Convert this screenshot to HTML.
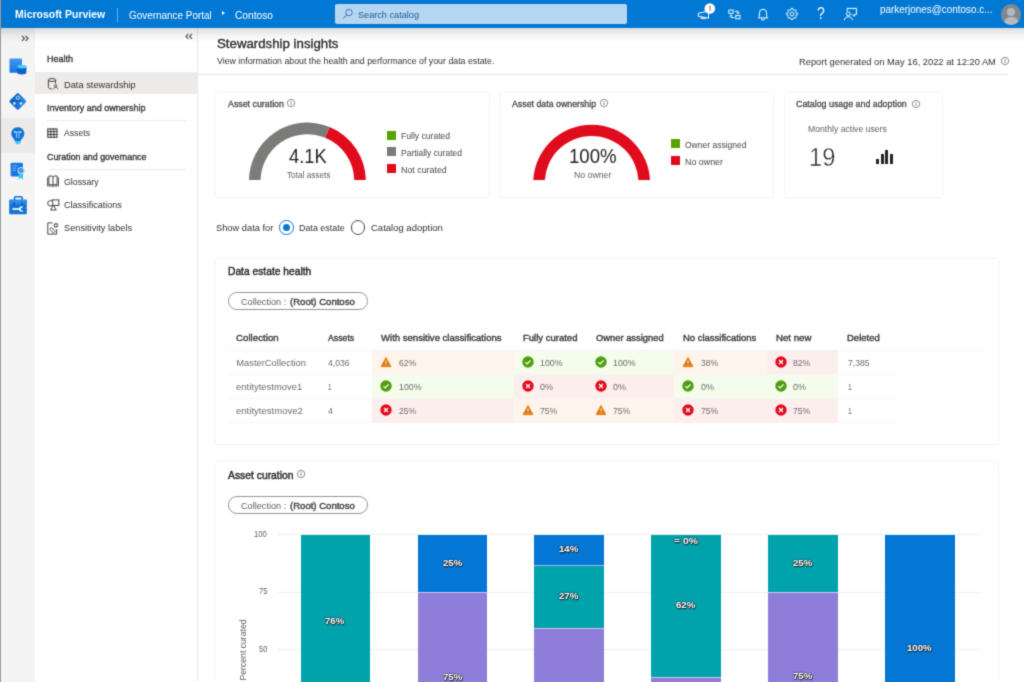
<!DOCTYPE html>
<html>
<head>
<meta charset="utf-8">
<title>Stewardship insights - Microsoft Purview</title>
<style>
*{box-sizing:border-box;margin:0;padding:0}
html,body{width:1024px;height:682px;overflow:hidden;background:#fff}
body{font-family:"Liberation Sans",sans-serif;color:#323130;position:relative;font-size:9.5px}
.a{position:absolute}
.t{position:absolute;white-space:nowrap;line-height:1;transform-origin:0 50%}
.card{position:absolute;background:#fff;box-shadow:0 0 2.5px rgba(0,0,0,.09),0 0.5px 1.5px rgba(0,0,0,.05)}
svg{position:absolute;overflow:visible}
</style>
</head>
<body>
<svg width="0" height="0" style="position:absolute"><filter id="soft" x="0" y="0" width="100%" height="100%" color-interpolation-filters="sRGB"><feConvolveMatrix order="3" kernelMatrix="0.0243 0.1072 0.0243 0.1072 0.4741 0.1072 0.0243 0.1072 0.0243" divisor="1" edgeMode="duplicate" preserveAlpha="true"/></filter></svg>
<div id="page" style="position:absolute;left:0;top:0;width:1024px;height:682px;filter:url(#soft)">
<div class="a" style="left:0px;top:28px;width:1024px;height:674px;background:#fff;"></div>
<div class="a" style="left:198px;top:28px;width:826px;height:47px;background:#fff;"></div>
<div class="a" style="left:198px;top:74px;width:810px;height:1px;background:#e3e2e1;"></div>
<div class="a" style="left:1px;top:28px;width:34px;height:674px;background:#f5f4f4;"></div>
<div class="a" style="left:1px;top:118px;width:34px;height:35px;background:#ebeae9;"></div>
<div class="a" style="left:35px;top:28px;width:163px;height:674px;background:#fff;border-right:1px solid #e9e8e7"></div>
<div class="a" style="left:0px;top:28px;width:1024px;height:16px;background:linear-gradient(rgba(0,0,0,.135) 0%,rgba(0,0,0,.085) 25%,rgba(0,0,0,.04) 50%,rgba(0,0,0,.012) 75%,rgba(0,0,0,0) 100%);"></div>
<div class="a" style="left:0px;top:0px;width:1024px;height:28px;background:#0078d4;"></div>
<div class="t" style="left:15.30px;top:9.33px;font-size:10.6px;color:#fff;font-weight:bold;transform:scaleX(0.9880);">Microsoft Purview</div>
<div class="a" style="left:117px;top:8px;width:1px;height:14px;background:#6aa9e6;"></div>
<div class="t" style="left:129.20px;top:10.50px;font-size:10.4px;color:#fff;transform:scaleX(0.9548);">Governance Portal</div>
<div class="a" style="left:221.8px;top:10.6px;width:0;height:0;border-left:3.6px solid #fff;border-top:2.8px solid transparent;border-bottom:2.8px solid transparent"></div>
<div class="t" style="left:235.30px;top:10.50px;font-size:10.4px;color:#fff;transform:scaleX(0.9810);">Contoso</div>
<div class="a" style="left:335.2px;top:4px;width:291.6px;height:20.4px;background:#b5d6f1;border-radius:2px"></div>
<div class="t" style="left:358.30px;top:9.57px;font-size:9.6px;color:#1f5c99;transform:scaleX(0.9525);">Search catalog</div>
<svg style="left:342px;top:8px" width="12" height="12" viewBox="0 0 12 12"><circle cx="7" cy="4.6" r="3.2" fill="none" stroke="#356fa8" stroke-width="0.9"/><path d="M4.7 6.9 L1.2 10.6" stroke="#356fa8" stroke-width="1" fill="none"/></svg>
<div class="t" style="left:880.00px;top:4.78px;font-size:10.3px;color:#fff;transform:scaleX(0.9620);">parkerjones@contoso.c...</div>
<div class="a" style="left:1001px;top:4.3px;width:20.4px;height:20.4px;border-radius:50%;background:#808890;overflow:hidden"><div class="a" style="left:6px;top:3.5px;width:8px;height:8px;border-radius:50%;background:#b6babe"></div><div class="a" style="left:2.5px;top:12.5px;width:15px;height:12px;border-radius:7px 7px 0 0;background:#b6babe"></div></div>
<svg style="left:696px;top:2px" width="22" height="20" viewBox="0 0 22 20"><path d="M2.3 11.2 L12.6 9.2 V16.2 L2.3 14.2 Z" fill="none" stroke="#fff" stroke-width="1" stroke-linejoin="round"/><path d="M5.2 14.9 v1.5 h4.4 v-0.7" fill="none" stroke="#fff" stroke-width="1"/><circle cx="13.8" cy="6.5" r="5.3" fill="#fff"/><path d="M13 5.1 l1.1 -0.9 v4.9" stroke="#a85a1e" stroke-width="0.9" fill="none"/></svg>
<svg style="left:727.6px;top:8.6px" width="13" height="11" viewBox="0 0 13 11"><rect x="0.9" y="1" width="4.2" height="3.4" fill="none" stroke="#fff" stroke-width="0.95"/><rect x="7.8" y="6.4" width="4.2" height="3.4" fill="none" stroke="#fff" stroke-width="0.95"/><path d="M6.6 2.2 h3.4 v2.4 M8.5 3.4 l1.5 1.5 l1.5 -1.5" fill="none" stroke="#fff" stroke-width="0.9"/><path d="M6.4 8.6 h-3.4 v-2.4 M1.5 7.4 l1.5 -1.5 l1.5 1.5" fill="none" stroke="#fff" stroke-width="0.9"/></svg>
<svg style="left:756.5px;top:7.5px" width="12" height="14" viewBox="0 0 12 14"><path d="M6 1.2 a3.6 3.6 0 0 1 3.6 3.6 v3.4 l1.1 1.7 h-9.4 l1.1 -1.7 v-3.4 a3.6 3.6 0 0 1 3.6 -3.6 z" fill="none" stroke="#fff" stroke-width="1" stroke-linejoin="round"/><path d="M4.5 10.6 a1.5 1.5 0 0 0 3 0" fill="none" stroke="#fff" stroke-width="1"/></svg>
<svg style="left:784.8px;top:7.3px" width="14" height="14" viewBox="0 0 14 14"><path d="M12.55 6.27 L12.55 7.73 L11.06 8.09 L10.64 9.10 L11.44 10.41 L10.41 11.44 L9.10 10.64 L8.09 11.06 L7.73 12.55 L6.27 12.55 L5.91 11.06 L4.90 10.64 L3.59 11.44 L2.56 10.41 L3.36 9.10 L2.94 8.09 L1.45 7.73 L1.45 6.27 L2.94 5.91 L3.36 4.90 L2.56 3.59 L3.59 2.56 L4.90 3.36 L5.91 2.94 L6.27 1.45 L7.73 1.45 L8.09 2.94 L9.10 3.36 L10.41 2.56 L11.44 3.59 L10.64 4.90 L11.06 5.91 Z" fill="none" stroke="#fff" stroke-width="0.95" stroke-linejoin="round"/><circle cx="7" cy="7" r="1.9" fill="none" stroke="#fff" stroke-width="0.95"/></svg>
<div class="t" style="left:816.80px;top:6.19px;font-size:15.6px;color:#fff;transform:scaleX(0.8990);">?</div>
<svg style="left:843px;top:7px" width="15" height="14" viewBox="0 0 15 14"><path d="M4.2 4.4 v-3 h9.2 v6.2 h-2.2 v1.8 l-1.8 -1.8 h-0.6" fill="none" stroke="#fff" stroke-width="1" stroke-linejoin="round"/><circle cx="5.4" cy="6.8" r="1.9" fill="none" stroke="#fff" stroke-width="1"/><path d="M1.4 13.2 c0 -4.6 8 -4.6 8 0" fill="none" stroke="#fff" stroke-width="1"/></svg>
<div class="t" style="left:216.80px;top:36.70px;font-size:13.7px;color:#2b2a29;-webkit-text-stroke:0.36px #2b2a29;transform:scaleX(0.9678);">Stewardship insights</div>
<div class="t" style="left:216.80px;top:56.73px;font-size:9.3px;color:#323130;transform:scaleX(0.9472);">View information about the health and performance of your data estate.</div>
<div class="t" style="left:799.00px;top:57.17px;font-size:9.6px;color:#323130;transform:scaleX(0.9714);">Report generated on May 16, 2022 at 12:20 AM</div>
<svg style="left:21.3px;top:34.6px" width="9" height="7" viewBox="0 0 9 7"><path d="M1 0.9 L3.4 3.4 L1 5.9 M4.6 0.9 L7 3.4 L4.6 5.9" fill="none" stroke="#454341" stroke-width="1.1"/></svg>
<svg style="left:8px;top:56px" width="20" height="20" viewBox="0 0 20 20"><defs><linearGradient id="g1" x1="0" y1="0" x2="0" y2="1"><stop offset="0" stop-color="#3f98f0"/><stop offset="1" stop-color="#1a72dc"/></linearGradient></defs><rect x="1.5" y="2.4" width="12.5" height="14.3" rx="0.8" fill="url(#g1)"/><path d="M9.3 10.6 v6 a4.55 1.9 0 0 0 9.1 0 v-6 z" fill="#0b63c6"/><ellipse cx="13.85" cy="10.6" rx="4.55" ry="1.9" fill="#4fd2f2"/></svg>
<svg style="left:8px;top:91px" width="20" height="20" viewBox="0 0 20 20"><defs><linearGradient id="g2" x1="1" y1="0" x2="0" y2="1"><stop offset="0" stop-color="#2c8bea"/><stop offset="1" stop-color="#0c5cc0"/></linearGradient></defs><rect x="3.5" y="4.1" width="12.6" height="12.6" rx="1.5" transform="rotate(45 9.8 10.4)" fill="url(#g2)"/><path d="M9.8 8.4 L6.6 12.2 M9.8 8.4 L12.9 12.2" stroke="#0b52ad" stroke-width="1.1" fill="none"/><circle cx="9.8" cy="6.9" r="1.6" fill="#1a6fd0" stroke="#bfe6ff" stroke-width="0.9"/><circle cx="6.4" cy="12.4" r="1.4" fill="#b6e9ff"/><circle cx="12.95" cy="12.4" r="1.4" fill="#b6e9ff"/></svg>
<svg style="left:8px;top:124px" width="20" height="22" viewBox="0 0 20 22"><path d="M9.8 3.2 a6.4 6.4 0 0 1 4.3 11.2 c-0.9 0.9 -1.2 1.6 -1.3 2.9 h-6 c-0.1 -1.3 -0.4 -2 -1.3 -2.9 a6.4 6.4 0 0 1 4.3 -11.2 z" fill="#1272d6"/><rect x="7" y="17" width="5.6" height="2.2" rx="0.6" fill="#3ccaf2"/><rect x="8" y="19" width="3.6" height="1.3" rx="0.6" fill="#3ccaf2"/><path d="M7.4 8 h4.8 M8.6 8 v6 M11 8 v6" stroke="#9fd4fb" stroke-width="0.9" fill="none"/><circle cx="7" cy="8" r="0.9" fill="#cfeaff"/><circle cx="12.6" cy="8" r="0.9" fill="#cfeaff"/></svg>
<svg style="left:8px;top:160px" width="20" height="22" viewBox="0 0 20 22"><rect x="2.6" y="2.8" width="12.3" height="13.6" rx="0.8" fill="#1a76de"/><path d="M4.5 6 h5 M4.5 8.2 h3.4 M4.5 10.4 h3.4" stroke="#7fbaf3" stroke-width="0.9"/><path d="M10.8 13 v6.4 l2.1 -1.6 l2.1 1.6 v-6.4 z" fill="#35c6f0"/><circle cx="13" cy="10.4" r="3.5" fill="#a9d2f6"/><circle cx="13" cy="10.4" r="2.2" fill="#1a76de"/><path d="M11.9 10.4 l0.8 0.8 l1.5 -1.6" stroke="#fff" stroke-width="0.7" fill="none"/></svg>
<svg style="left:8px;top:194px" width="22" height="22" viewBox="0 0 22 22"><path d="M6.5 6 v-2.2 a1 1 0 0 1 1 -1 h5.6 a1 1 0 0 1 1 1 v2.2" fill="none" stroke="#1272d6" stroke-width="1.6"/><rect x="1.2" y="5.8" width="17.6" height="14.4" rx="1" fill="#1272d6"/><rect x="1.2" y="5.8" width="17.6" height="4.4" rx="1" fill="#2f8ae8"/><rect x="5.4" y="8.4" width="1.6" height="2.8" fill="#0a56b0"/><rect x="13" y="8.4" width="1.6" height="2.8" fill="#0a56b0"/><path d="M4.4 15 h8.4" stroke="#fff" stroke-width="1.6"/><path d="M14.6 13.3 a2 2 0 1 0 0 3.4" stroke="#fff" stroke-width="1.4" fill="none"/></svg>
<svg style="left:184.8px;top:33.2px" width="9" height="7" viewBox="0 0 9 7"><path d="M3.4 0.9 L1 3.4 L3.4 5.9 M7 0.9 L4.6 3.4 L7 5.9" fill="none" stroke="#454341" stroke-width="1.1"/></svg>
<div class="t" style="left:47.20px;top:55.01px;font-size:9.2px;color:#3b3a39;-webkit-text-stroke:0.37px #3b3a39;transform:scaleX(0.9776);">Health</div>
<div class="a" style="left:35px;top:72px;width:162.4px;height:22.3px;background:#edebe9;"></div>
<div class="t" style="left:64.30px;top:79.54px;font-size:9.4px;color:#323130;transform:scaleX(0.9900);">Data stewardship</div>
<div class="t" style="left:47.20px;top:104.21px;font-size:9.2px;color:#3b3a39;-webkit-text-stroke:0.37px #3b3a39;transform:scaleX(0.9836);">Inventory and ownership</div>
<div class="a" style="left:47px;top:120px;width:139px;height:1px;background:#eae9e8;"></div>
<div class="t" style="left:64.30px;top:128.44px;font-size:9.4px;color:#323130;transform:scaleX(0.9252);">Assets</div>
<div class="t" style="left:47.20px;top:152.81px;font-size:9.2px;color:#3b3a39;-webkit-text-stroke:0.37px #3b3a39;transform:scaleX(0.9640);">Curation and governance</div>
<div class="a" style="left:47px;top:168.6px;width:139px;height:1px;background:#eae9e8;"></div>
<div class="t" style="left:64.30px;top:176.74px;font-size:9.4px;color:#323130;transform:scaleX(0.9356);">Glossary</div>
<div class="t" style="left:64.30px;top:200.04px;font-size:9.4px;color:#323130;transform:scaleX(0.9654);">Classifications</div>
<div class="t" style="left:64.30px;top:223.24px;font-size:9.4px;color:#323130;transform:scaleX(0.9829);">Sensitivity labels</div>
<svg style="left:47px;top:77px" width="12" height="13" viewBox="0 0 12 13"><path d="M1.4 3 v7.2 c0 1.1 1.6 1.7 3.6 1.7" fill="none" stroke="#3b3a39" stroke-width="0.95"/><path d="M8.6 3 v3.4" fill="none" stroke="#3b3a39" stroke-width="0.95"/><ellipse cx="5" cy="3" rx="3.6" ry="1.5" fill="none" stroke="#3b3a39" stroke-width="0.95"/><circle cx="8.6" cy="8.6" r="1.15" fill="none" stroke="#3b3a39" stroke-width="0.85"/><path d="M6.5 12.2 c0 -2.6 4.2 -2.6 4.2 0" fill="none" stroke="#3b3a39" stroke-width="0.85"/></svg>
<svg style="left:47px;top:127.5px" width="11" height="10" viewBox="0 0 11 10"><rect x="0.8" y="0.9" width="9.2" height="8.4" fill="#fff" stroke="#3b3a39" stroke-width="1.1"/><path d="M3.85 0.9 v8.4 M6.95 0.9 v8.4 M0.8 3.7 h9.2 M0.8 6.5 h9.2" stroke="#3b3a39" stroke-width="1" fill="none"/></svg>
<svg style="left:46.5px;top:175px" width="12" height="12" viewBox="0 0 12 12"><path d="M1.9 1 h2.5 a1.6 1.6 0 0 1 1.6 1.4 a1.6 1.6 0 0 1 1.6 -1.4 h2.5 v8.6 h-2.5 a1.6 1.6 0 0 0 -1.6 1 a1.6 1.6 0 0 0 -1.6 -1 h-2.5 z M6 2.4 v8.2" fill="none" stroke="#3b3a39" stroke-width="0.95"/><path d="M0.6 2.4 v8.6 h10.8 v-8.6" fill="none" stroke="#3b3a39" stroke-width="0.9"/></svg>
<svg style="left:46.5px;top:199px" width="13" height="12" viewBox="0 0 13 12"><rect x="5.2" y="0.9" width="6.6" height="5.6" fill="none" stroke="#3b3a39" stroke-width="0.95"/><circle cx="3.4" cy="4.3" r="2.7" fill="#fff" stroke="#3b3a39" stroke-width="0.95"/><path d="M6.4 6.6 l2.9 4.4 h-5.8 z" fill="#fff" stroke="#3b3a39" stroke-width="0.95" stroke-linejoin="round"/></svg>
<svg style="left:47px;top:221.5px" width="12" height="13" viewBox="0 0 12 13"><path d="M5.6 0.9 h-4.8 v11.2 h8.8 v-5" fill="none" stroke="#3b3a39" stroke-width="0.95"/><rect x="2.6" y="6.9" width="5.6" height="2.5" rx="0.7" transform="rotate(45 5.4 8.15)" fill="none" stroke="#3b3a39" stroke-width="0.85"/><circle cx="8.9" cy="3.3" r="1.55" fill="none" stroke="#3b3a39" stroke-width="0.9"/><path d="M8.9 0.8 v1 M8.9 4.8 v1 M6.4 3.3 h1 M10.4 3.3 h1 M7.1 1.5 l0.7 0.7 M10 4.4 l0.7 0.7 M10.7 1.5 l-0.7 0.7 M7.8 4.4 l-0.7 0.7" stroke="#3b3a39" stroke-width="0.8"/></svg>
<div class="card" style="left:216px;top:92.5px;width:272.5px;height:104.5px"></div>
<div class="card" style="left:500px;top:92.5px;width:272.5px;height:104.5px"></div>
<div class="card" style="left:785px;top:92.5px;width:156.5px;height:104.5px"></div>
<div class="t" style="left:227.60px;top:100.31px;font-size:9.2px;color:#464442;-webkit-text-stroke:0.28px #464442;transform:scaleX(0.9606);">Asset curation</div>
<svg style="left:286.2px;top:98.4px" width="10" height="10" viewBox="0 0 10 10"><circle cx="5" cy="5" r="3.7" fill="none" stroke="#605e5c" stroke-width="0.7"/><path d="M5 4.4 v2.5" stroke="#605e5c" stroke-width="0.8"/><circle cx="5" cy="3.2" r="0.5" fill="#605e5c"/></svg>
<div class="t" style="left:512.00px;top:100.31px;font-size:9.2px;color:#464442;-webkit-text-stroke:0.28px #464442;transform:scaleX(0.9572);">Asset data ownership</div>
<svg style="left:598.7px;top:98.4px" width="10" height="10" viewBox="0 0 10 10"><circle cx="5" cy="5" r="3.7" fill="none" stroke="#605e5c" stroke-width="0.7"/><path d="M5 4.4 v2.5" stroke="#605e5c" stroke-width="0.8"/><circle cx="5" cy="3.2" r="0.5" fill="#605e5c"/></svg>
<div class="t" style="left:796.30px;top:100.41px;font-size:9.2px;color:#464442;-webkit-text-stroke:0.28px #464442;transform:scaleX(0.9635);">Catalog usage and adoption</div>
<svg style="left:910.5px;top:98.6px" width="10" height="10" viewBox="0 0 10 10"><circle cx="5" cy="5" r="3.7" fill="none" stroke="#605e5c" stroke-width="0.7"/><path d="M5 4.4 v2.5" stroke="#605e5c" stroke-width="0.8"/><circle cx="5" cy="3.2" r="0.5" fill="#605e5c"/></svg>
<div class="a" style="left:0;top:0;width:1024px;height:180px;overflow:hidden"><svg style="left:0;top:0" width="1024" height="200" viewBox="0 0 1024 200"><path d="M248.96 182.02 A58.45 58.45 0 0 1 329.67 126.96 L325.25 137.69 A46.85 46.85 0 0 0 260.56 181.82 Z" fill="#7c7b7a"/><path d="M329.67 126.96 A58.45 58.45 0 0 1 365.84 182.02 L354.24 181.82 A46.85 46.85 0 0 0 325.25 137.69 Z" fill="#e00b1c"/><path d="M533.21 182.02 A58.45 58.45 0 0 1 650.09 182.02 L638.49 181.82 A46.85 46.85 0 0 0 544.81 181.82 Z" fill="#e00b1c"/></svg></div>
<div class="t" style="left:289.30px;top:147.44px;font-size:19.8px;color:#252423;transform:scaleX(0.9256);">4.1K</div>
<div class="t" style="left:286.50px;top:171.21px;font-size:9.2px;color:#605e5c;transform:scaleX(0.8955);">Total assets</div>
<div class="t" style="left:569.30px;top:147.44px;font-size:19.8px;color:#252423;transform:scaleX(0.9419);">100%</div>
<div class="t" style="left:573.80px;top:171.21px;font-size:9.2px;color:#605e5c;transform:scaleX(0.9498);">No owner</div>
<div class="a" style="left:387.2px;top:130.8px;width:8.8px;height:8.8px;background:#57a300;"></div>
<div class="a" style="left:387.2px;top:147.4px;width:8.8px;height:8.8px;background:#7c7b7a;"></div>
<div class="a" style="left:387.2px;top:164.1px;width:8.8px;height:8.8px;background:#e00b1c;"></div>
<div class="t" style="left:400.80px;top:132.13px;font-size:9.3px;color:#484644;transform:scaleX(0.9222);">Fully curated</div>
<div class="t" style="left:400.80px;top:148.93px;font-size:9.3px;color:#484644;transform:scaleX(0.9148);">Partially curated</div>
<div class="t" style="left:400.80px;top:165.63px;font-size:9.3px;color:#484644;transform:scaleX(0.9526);">Not curated</div>
<div class="a" style="left:671.3px;top:139.3px;width:8.9px;height:8.9px;background:#57a300;"></div>
<div class="a" style="left:671.3px;top:156.0px;width:8.9px;height:8.9px;background:#e00b1c;"></div>
<div class="t" style="left:685.20px;top:140.83px;font-size:9.3px;color:#484644;transform:scaleX(0.9151);">Owner assigned</div>
<div class="t" style="left:685.20px;top:157.63px;font-size:9.3px;color:#484644;transform:scaleX(0.9547);">No owner</div>
<div class="t" style="left:807.70px;top:124.71px;font-size:9.2px;color:#605e5c;transform:scaleX(0.9409);">Monthly active users</div>
<div class="t" style="left:809.20px;top:144.97px;font-size:25.2px;color:#252423;transform:scaleX(0.9382);-webkit-text-stroke:0.5px #fff;">19</div>
<div class="a" style="left:876.2px;top:158.7px;width:3.1px;height:5px;background:#252423;"></div>
<div class="a" style="left:880.7px;top:153.7px;width:3.1px;height:10px;background:#252423;"></div>
<div class="a" style="left:885.1px;top:150.0px;width:3.1px;height:13.7px;background:#252423;"></div>
<div class="a" style="left:889.6px;top:153.7px;width:3.1px;height:10px;background:#252423;"></div>
<svg style="left:999.5px;top:55.9px" width="10" height="10" viewBox="0 0 10 10"><circle cx="5" cy="5" r="3.7" fill="none" stroke="#605e5c" stroke-width="0.7"/><path d="M5 4.4 v2.5" stroke="#605e5c" stroke-width="0.8"/><circle cx="5" cy="3.2" r="0.5" fill="#605e5c"/></svg>
<div class="t" style="left:216.00px;top:223.04px;font-size:9.4px;color:#323130;transform:scaleX(0.9913);">Show data for</div>
<div class="a" style="left:279.4px;top:220.2px;width:14.6px;height:14.6px;border-radius:50%;border:1px solid #0078d4;background:#fff"></div><div class="a" style="left:283.1px;top:223.9px;width:7.2px;height:7.2px;border-radius:50%;background:#0078d4"></div>
<div class="t" style="left:299.20px;top:223.04px;font-size:9.4px;color:#323130;transform:scaleX(0.9527);">Data estate</div>
<div class="a" style="left:350.9px;top:220.2px;width:14.6px;height:14.6px;border-radius:50%;border:1px solid #4a4948;background:#fff"></div>
<div class="t" style="left:370.50px;top:223.04px;font-size:9.4px;color:#323130;transform:scaleX(1.0129);">Catalog adoption</div>
<div class="card" style="left:216px;top:258.5px;width:782px;height:185.5px"></div>
<div class="t" style="left:227.70px;top:267.40px;font-size:10.4px;color:#2b2a29;-webkit-text-stroke:0.42px #2b2a29;transform:scaleX(0.9868);">Data estate health</div>
<div class="a" style="left:228px;top:292.3px;width:139.7px;height:17.4px;border:1px solid #989694;border-radius:8.7px;background:#fff"></div>
<div class="t" style="left:240.60px;top:298.33px;font-size:9.3px;color:#605e5c;transform:scaleX(0.9837);">Collection : </div>
<div class="t" style="left:290.20px;top:298.33px;font-size:9.3px;color:#3b3a39;-webkit-text-stroke:0.37px #3b3a39;transform:scaleX(1.0275);">(Root) Contoso</div>
<div class="t" style="left:236.20px;top:333.71px;font-size:9.2px;color:#3b3a39;-webkit-text-stroke:0.37px #3b3a39;transform:scaleX(1.0594);">Collection</div>
<div class="t" style="left:328.00px;top:333.71px;font-size:9.2px;color:#3b3a39;-webkit-text-stroke:0.37px #3b3a39;transform:scaleX(0.9490);">Assets</div>
<div class="t" style="left:381.00px;top:333.71px;font-size:9.2px;color:#3b3a39;-webkit-text-stroke:0.37px #3b3a39;transform:scaleX(1.0400);">With sensitive classifications</div>
<div class="t" style="left:522.50px;top:333.71px;font-size:9.2px;color:#3b3a39;-webkit-text-stroke:0.37px #3b3a39;transform:scaleX(1.0348);">Fully curated</div>
<div class="t" style="left:595.50px;top:333.71px;font-size:9.2px;color:#3b3a39;-webkit-text-stroke:0.37px #3b3a39;transform:scaleX(1.0183);">Owner assigned</div>
<div class="t" style="left:683.20px;top:333.71px;font-size:9.2px;color:#3b3a39;-webkit-text-stroke:0.37px #3b3a39;transform:scaleX(1.0313);">No classifications</div>
<div class="t" style="left:775.50px;top:333.71px;font-size:9.2px;color:#3b3a39;-webkit-text-stroke:0.37px #3b3a39;transform:scaleX(1.0518);">Net new</div>
<div class="t" style="left:847.20px;top:333.71px;font-size:9.2px;color:#3b3a39;-webkit-text-stroke:0.37px #3b3a39;transform:scaleX(1.0343);">Deleted</div>
<div class="a" style="left:372.2px;top:350.4px;width:142.2px;height:23.3px;background:#fff4ec;"></div>
<div class="a" style="left:513.8px;top:350.4px;width:73.3px;height:23.3px;background:#f4fcec;"></div>
<div class="a" style="left:586.5px;top:350.4px;width:88.3px;height:23.3px;background:#f4fcec;"></div>
<div class="a" style="left:674.2px;top:350.4px;width:93.4px;height:23.3px;background:#fff4ec;"></div>
<div class="a" style="left:767px;top:350.4px;width:71.1px;height:23.3px;background:#fdeeee;"></div>
<div class="a" style="left:372.2px;top:373.7px;width:142.2px;height:24.0px;background:#f4fcec;"></div>
<div class="a" style="left:513.8px;top:373.7px;width:73.3px;height:24.0px;background:#fdeeee;"></div>
<div class="a" style="left:586.5px;top:373.7px;width:88.3px;height:24.0px;background:#fdeeee;"></div>
<div class="a" style="left:674.2px;top:373.7px;width:93.4px;height:24.0px;background:#f4fcec;"></div>
<div class="a" style="left:767px;top:373.7px;width:71.1px;height:24.0px;background:#f4fcec;"></div>
<div class="a" style="left:372.2px;top:397.7px;width:142.2px;height:23.9px;background:#fdeeee;"></div>
<div class="a" style="left:513.8px;top:397.7px;width:73.3px;height:23.9px;background:#fff4ec;"></div>
<div class="a" style="left:586.5px;top:397.7px;width:88.3px;height:23.9px;background:#fff4ec;"></div>
<div class="a" style="left:674.2px;top:397.7px;width:93.4px;height:23.9px;background:#fdeeee;"></div>
<div class="a" style="left:767px;top:397.7px;width:71.1px;height:23.9px;background:#fdeeee;"></div>
<div class="a" style="left:227.7px;top:349.6px;width:757.5px;height:1px;background:#f3f2f1;"></div>
<div class="a" style="left:227.7px;top:373.6px;width:667.3px;height:1px;background:#f6f5f4;"></div>
<div class="a" style="left:227.7px;top:397.6px;width:667.3px;height:1px;background:#f6f5f4;"></div>
<div class="a" style="left:227.7px;top:421.6px;width:667.3px;height:1px;background:#f6f5f4;"></div>
<div class="t" style="left:236.20px;top:358.24px;font-size:9.4px;color:#6e6c6a;">MasterCollection</div>
<div class="t" style="left:328.00px;top:358.24px;font-size:9.4px;color:#6e6c6a;transform:scaleX(0.9225);">4,036</div>
<svg style="left:380.3px;top:356.0px" width="12" height="12" viewBox="0 0 12 12"><path d="M6 1.2 L11.1 10.7 H0.9 Z" fill="#e07a0a" stroke="#e07a0a" stroke-width="0.6" stroke-linejoin="round"/><path d="M6 4.4 v3.2" stroke="#ffe9cf" stroke-width="0.9"/><circle cx="6" cy="9.1" r="0.55" fill="#ffe9cf"/></svg>
<div class="t" style="left:398.50px;top:358.24px;font-size:9.4px;color:#6e6c6a;transform:scaleX(0.9142);">62%</div>
<svg style="left:522.1px;top:356.0px" width="12" height="12" viewBox="0 0 12 12"><circle cx="6" cy="6" r="5.7" fill="#4f9e0e"/><path d="M3.4 6.2 L5.2 8 L8.6 4.4" fill="none" stroke="#fff" stroke-width="1.2"/></svg>
<div class="t" style="left:540.00px;top:358.24px;font-size:9.4px;color:#6e6c6a;transform:scaleX(0.9359);">100%</div>
<svg style="left:595.1px;top:356.0px" width="12" height="12" viewBox="0 0 12 12"><circle cx="6" cy="6" r="5.7" fill="#4f9e0e"/><path d="M3.4 6.2 L5.2 8 L8.6 4.4" fill="none" stroke="#fff" stroke-width="1.2"/></svg>
<div class="t" style="left:613.00px;top:358.24px;font-size:9.4px;color:#6e6c6a;transform:scaleX(0.9359);">100%</div>
<svg style="left:682.3000000000001px;top:356.0px" width="12" height="12" viewBox="0 0 12 12"><path d="M6 1.2 L11.1 10.7 H0.9 Z" fill="#e07a0a" stroke="#e07a0a" stroke-width="0.6" stroke-linejoin="round"/><path d="M6 4.4 v3.2" stroke="#ffe9cf" stroke-width="0.9"/><circle cx="6" cy="9.1" r="0.55" fill="#ffe9cf"/></svg>
<div class="t" style="left:700.50px;top:358.24px;font-size:9.4px;color:#6e6c6a;transform:scaleX(0.9142);">38%</div>
<svg style="left:775.3000000000001px;top:356.0px" width="12" height="12" viewBox="0 0 12 12"><circle cx="6" cy="6" r="5.7" fill="#e00b1c"/><path d="M4 4 L8 8 M8 4 L4 8" fill="none" stroke="#fff" stroke-width="1.2"/></svg>
<div class="t" style="left:793.00px;top:358.24px;font-size:9.4px;color:#6e6c6a;transform:scaleX(0.9142);">82%</div>
<div class="t" style="left:847.60px;top:358.24px;font-size:9.4px;color:#6e6c6a;transform:scaleX(0.9225);">7,385</div>
<div class="t" style="left:236.20px;top:381.84px;font-size:9.4px;color:#6e6c6a;transform:scaleX(1.0101);">entitytestmove1</div>
<div class="t" style="left:328.00px;top:381.84px;font-size:9.4px;color:#6e6c6a;transform:scaleX(0.6695);">1</div>
<svg style="left:380.3px;top:379.9px" width="12" height="12" viewBox="0 0 12 12"><circle cx="6" cy="6" r="5.7" fill="#4f9e0e"/><path d="M3.4 6.2 L5.2 8 L8.6 4.4" fill="none" stroke="#fff" stroke-width="1.2"/></svg>
<div class="t" style="left:398.50px;top:381.84px;font-size:9.4px;color:#6e6c6a;transform:scaleX(0.9359);">100%</div>
<svg style="left:522.1px;top:379.9px" width="12" height="12" viewBox="0 0 12 12"><circle cx="6" cy="6" r="5.7" fill="#e00b1c"/><path d="M4 4 L8 8 M8 4 L4 8" fill="none" stroke="#fff" stroke-width="1.2"/></svg>
<div class="t" style="left:540.00px;top:381.84px;font-size:9.4px;color:#6e6c6a;transform:scaleX(0.9569);">0%</div>
<svg style="left:595.1px;top:379.9px" width="12" height="12" viewBox="0 0 12 12"><circle cx="6" cy="6" r="5.7" fill="#e00b1c"/><path d="M4 4 L8 8 M8 4 L4 8" fill="none" stroke="#fff" stroke-width="1.2"/></svg>
<div class="t" style="left:613.00px;top:381.84px;font-size:9.4px;color:#6e6c6a;transform:scaleX(0.9569);">0%</div>
<svg style="left:682.3000000000001px;top:379.9px" width="12" height="12" viewBox="0 0 12 12"><circle cx="6" cy="6" r="5.7" fill="#4f9e0e"/><path d="M3.4 6.2 L5.2 8 L8.6 4.4" fill="none" stroke="#fff" stroke-width="1.2"/></svg>
<div class="t" style="left:700.50px;top:381.84px;font-size:9.4px;color:#6e6c6a;transform:scaleX(0.9569);">0%</div>
<svg style="left:775.3000000000001px;top:379.9px" width="12" height="12" viewBox="0 0 12 12"><circle cx="6" cy="6" r="5.7" fill="#4f9e0e"/><path d="M3.4 6.2 L5.2 8 L8.6 4.4" fill="none" stroke="#fff" stroke-width="1.2"/></svg>
<div class="t" style="left:793.00px;top:381.84px;font-size:9.4px;color:#6e6c6a;transform:scaleX(0.9569);">0%</div>
<div class="t" style="left:847.60px;top:381.84px;font-size:9.4px;color:#6e6c6a;transform:scaleX(0.7269);">1</div>
<div class="t" style="left:236.20px;top:405.54px;font-size:9.4px;color:#6e6c6a;transform:scaleX(1.0177);">entitytestmove2</div>
<div class="t" style="left:328.00px;top:405.54px;font-size:9.4px;color:#6e6c6a;transform:scaleX(0.9181);">4</div>
<svg style="left:380.3px;top:403.8px" width="12" height="12" viewBox="0 0 12 12"><circle cx="6" cy="6" r="5.7" fill="#e00b1c"/><path d="M4 4 L8 8 M8 4 L4 8" fill="none" stroke="#fff" stroke-width="1.2"/></svg>
<div class="t" style="left:398.50px;top:405.54px;font-size:9.4px;color:#6e6c6a;transform:scaleX(0.9142);">25%</div>
<svg style="left:522.1px;top:403.8px" width="12" height="12" viewBox="0 0 12 12"><path d="M6 1.2 L11.1 10.7 H0.9 Z" fill="#e07a0a" stroke="#e07a0a" stroke-width="0.6" stroke-linejoin="round"/><path d="M6 4.4 v3.2" stroke="#ffe9cf" stroke-width="0.9"/><circle cx="6" cy="9.1" r="0.55" fill="#ffe9cf"/></svg>
<div class="t" style="left:540.00px;top:405.54px;font-size:9.4px;color:#6e6c6a;transform:scaleX(0.9142);">75%</div>
<svg style="left:595.1px;top:403.8px" width="12" height="12" viewBox="0 0 12 12"><path d="M6 1.2 L11.1 10.7 H0.9 Z" fill="#e07a0a" stroke="#e07a0a" stroke-width="0.6" stroke-linejoin="round"/><path d="M6 4.4 v3.2" stroke="#ffe9cf" stroke-width="0.9"/><circle cx="6" cy="9.1" r="0.55" fill="#ffe9cf"/></svg>
<div class="t" style="left:613.00px;top:405.54px;font-size:9.4px;color:#6e6c6a;transform:scaleX(0.9142);">75%</div>
<svg style="left:682.3000000000001px;top:403.8px" width="12" height="12" viewBox="0 0 12 12"><circle cx="6" cy="6" r="5.7" fill="#e00b1c"/><path d="M4 4 L8 8 M8 4 L4 8" fill="none" stroke="#fff" stroke-width="1.2"/></svg>
<div class="t" style="left:700.50px;top:405.54px;font-size:9.4px;color:#6e6c6a;transform:scaleX(0.9142);">75%</div>
<svg style="left:775.3000000000001px;top:403.8px" width="12" height="12" viewBox="0 0 12 12"><circle cx="6" cy="6" r="5.7" fill="#e00b1c"/><path d="M4 4 L8 8 M8 4 L4 8" fill="none" stroke="#fff" stroke-width="1.2"/></svg>
<div class="t" style="left:793.00px;top:405.54px;font-size:9.4px;color:#6e6c6a;transform:scaleX(0.9142);">75%</div>
<div class="t" style="left:847.60px;top:405.54px;font-size:9.4px;color:#6e6c6a;transform:scaleX(0.7269);">1</div>
<div class="card" style="left:216px;top:461.5px;width:782px;height:240px"></div>
<div class="t" style="left:227.70px;top:471.20px;font-size:10.4px;color:#2b2a29;-webkit-text-stroke:0.42px #2b2a29;transform:scaleX(0.9954);">Asset curation</div>
<svg style="left:296px;top:469px" width="10" height="10" viewBox="0 0 10 10"><circle cx="5" cy="5" r="3.7" fill="none" stroke="#605e5c" stroke-width="0.7"/><path d="M5 4.4 v2.5" stroke="#605e5c" stroke-width="0.8"/><circle cx="5" cy="3.2" r="0.5" fill="#605e5c"/></svg>
<div class="a" style="left:228px;top:495.8px;width:140px;height:17.9px;border:1px solid #989694;border-radius:8.95px;background:#fff"></div>
<div class="t" style="left:240.60px;top:501.93px;font-size:9.3px;color:#605e5c;transform:scaleX(0.9837);">Collection : </div>
<div class="t" style="left:290.20px;top:501.93px;font-size:9.3px;color:#3b3a39;-webkit-text-stroke:0.37px #3b3a39;transform:scaleX(1.0275);">(Root) Contoso</div>
<div class="a" style="left:277.7px;top:534.1px;width:701.3px;height:1px;background:#ededec;"></div>
<div class="t" style="left:254.30px;top:529.92px;font-size:8.6px;color:#605e5c;transform:scaleX(0.8851);">100</div>
<div class="a" style="left:277.7px;top:591.5px;width:701.3px;height:1px;background:#ededec;"></div>
<div class="t" style="left:258.60px;top:586.80px;font-size:8.6px;color:#605e5c;transform:scaleX(0.8781);">75</div>
<div class="a" style="left:277.7px;top:648.9px;width:701.3px;height:1px;background:#ededec;"></div>
<div class="t" style="left:258.60px;top:644.87px;font-size:8.6px;color:#605e5c;transform:scaleX(0.8781);">50</div>
<div class="t" style="left:244.4px;top:649px;font-size:9px;color:#605e5c;transform-origin:0 0;transform:translate(-4.6px,31.5px) rotate(-90deg) scaleX(0.96)">Percent curated</div>
<div class="a" style="left:300.8px;top:534.6px;width:69.4px;height:165.4px;background:#00a2ab;"></div>
<div class="t" style="left:325.45px;top:615.64px;font-size:9.4px;color:#fff;font-weight:bold;transform:scaleX(1.0258);text-shadow:0 0 1.5px #222,0 0 1.5px #222,0.5px 0.5px 1px #222;">76%</div>
<div class="a" style="left:418.0px;top:534.6px;width:69.4px;height:57.4px;background:#0476d6;"></div>
<div class="a" style="left:418.0px;top:592.0px;width:69.4px;height:108.0px;background:#8f7ed9;"></div>
<div class="a" style="left:418.0px;top:591.6px;width:69.4px;height:0.9px;background:rgba(255,255,255,.55);"></div>
<div class="t" style="left:442.65px;top:558.14px;font-size:9.4px;color:#fff;font-weight:bold;transform:scaleX(1.0258);text-shadow:0 0 1.5px #222,0 0 1.5px #222,0.5px 0.5px 1px #222;">25%</div>
<div class="t" style="left:442.65px;top:671.64px;font-size:9.4px;color:#fff;font-weight:bold;transform:scaleX(1.0258);text-shadow:0 0 1.5px #222,0 0 1.5px #222,0.5px 0.5px 1px #222;">75%</div>
<div class="a" style="left:534.3px;top:534.6px;width:69.4px;height:31.2px;background:#0476d6;"></div>
<div class="a" style="left:534.3px;top:565.8px;width:69.4px;height:62.2px;background:#00a2ab;"></div>
<div class="a" style="left:534.3px;top:565.4px;width:69.4px;height:0.9px;background:rgba(255,255,255,.55);"></div>
<div class="a" style="left:534.3px;top:628.0px;width:69.4px;height:72.0px;background:#8f7ed9;"></div>
<div class="a" style="left:534.3px;top:627.6px;width:69.4px;height:0.9px;background:rgba(255,255,255,.55);"></div>
<div class="t" style="left:558.95px;top:544.34px;font-size:9.4px;color:#fff;font-weight:bold;transform:scaleX(1.0258);text-shadow:0 0 1.5px #222,0 0 1.5px #222,0.5px 0.5px 1px #222;">14%</div>
<div class="t" style="left:558.95px;top:591.44px;font-size:9.4px;color:#fff;font-weight:bold;transform:scaleX(1.0258);text-shadow:0 0 1.5px #222,0 0 1.5px #222,0.5px 0.5px 1px #222;">27%</div>
<div class="a" style="left:651.4px;top:534.6px;width:69.4px;height:142.7px;background:#00a2ab;"></div>
<div class="a" style="left:651.4px;top:677.3px;width:69.4px;height:22.7px;background:#8f7ed9;"></div>
<div class="a" style="left:651.4px;top:676.9px;width:69.4px;height:0.9px;background:rgba(255,255,255,.55);"></div>
<div class="t" style="left:673.70px;top:535.64px;font-size:9.4px;color:#fff;font-weight:bold;transform:scaleX(1.1067);text-shadow:0 0 1.5px #222,0 0 1.5px #222,0.5px 0.5px 1px #222;">= 0%</div>
<div class="t" style="left:676.05px;top:599.94px;font-size:9.4px;color:#fff;font-weight:bold;transform:scaleX(1.0258);text-shadow:0 0 1.5px #222,0 0 1.5px #222,0.5px 0.5px 1px #222;">62%</div>
<div class="a" style="left:768.3px;top:534.6px;width:69.4px;height:57.4px;background:#00a2ab;"></div>
<div class="a" style="left:768.3px;top:592.0px;width:69.4px;height:108.0px;background:#8f7ed9;"></div>
<div class="a" style="left:768.3px;top:591.6px;width:69.4px;height:0.9px;background:rgba(255,255,255,.55);"></div>
<div class="t" style="left:792.95px;top:557.94px;font-size:9.4px;color:#fff;font-weight:bold;transform:scaleX(1.0258);text-shadow:0 0 1.5px #222,0 0 1.5px #222,0.5px 0.5px 1px #222;">25%</div>
<div class="t" style="left:792.95px;top:671.24px;font-size:9.4px;color:#fff;font-weight:bold;transform:scaleX(1.0258);text-shadow:0 0 1.5px #222,0 0 1.5px #222,0.5px 0.5px 1px #222;">75%</div>
<div class="a" style="left:885.2px;top:534.6px;width:69.4px;height:165.4px;background:#0476d6;"></div>
<div class="t" style="left:907.20px;top:643.04px;font-size:9.4px;color:#fff;font-weight:bold;transform:scaleX(1.0232);text-shadow:0 0 1.5px #222,0 0 1.5px #222,0.5px 0.5px 1px #222;">100%</div>
<div class="a" style="left:0;top:0;width:1px;height:700px;background:#9a9a9a"></div>
</div>
</body>
</html>
